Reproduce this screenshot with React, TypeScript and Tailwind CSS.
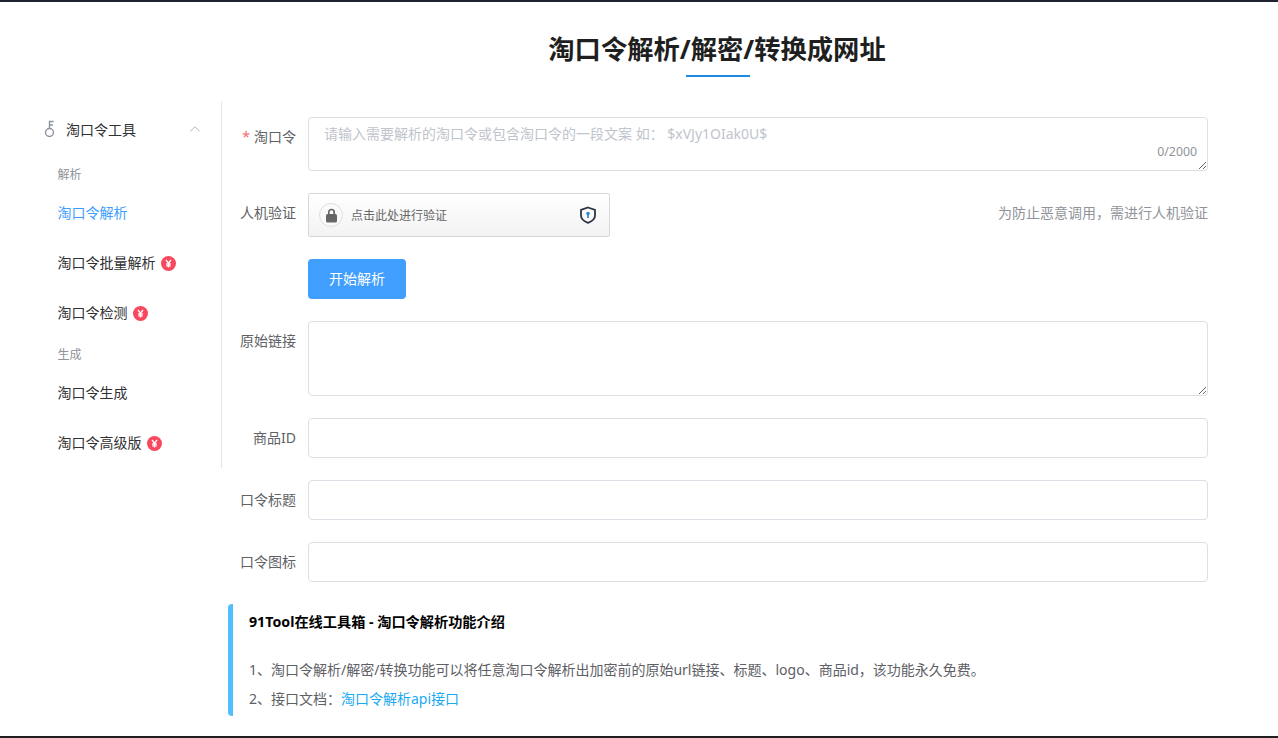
import { ChevronUp } from "lucide-react";

const cjk = "font-['Noto_Sans','Noto_Sans_CJK_SC',sans-serif]";

const KeyIcon = () => (
  <svg width="14" height="18" viewBox="0 0 14 18" fill="none" stroke="#8d939c" strokeWidth="1.4">
    <circle cx="6.5" cy="12.5" r="4" />
    <path d="M6.5 8.5V1.5H10.5M6.5 5H10" />
  </svg>
);

const Badge = () => (
  <span className="ml-[5px] mt-[2px] flex h-[15px] w-[15px] items-center justify-center rounded-full bg-[#f8485e]">
    <svg width="9" height="9" viewBox="0 0 9 9" fill="none" stroke="#fff" strokeWidth="1.3">
      <path d="M2 1L4.5 4.2L7 1M4.5 4.2V8.5M2.2 5H6.8M2.2 6.8H6.8" />
    </svg>
  </span>
);

const menu = [
  { type: "group", label: "解析" },
  { type: "item", label: "淘口令解析", active: true },
  { type: "item", label: "淘口令批量解析", paid: true },
  { type: "item", label: "淘口令检测", paid: true },
  { type: "group", label: "生成" },
  { type: "item", label: "淘口令生成" },
  { type: "item", label: "淘口令高级版", paid: true },
];

const Sidebar = () => (
  <aside className="h-[367px] w-[222px] shrink-0 border-r border-[#e6e6e6]">
    <div className="flex h-[56px] items-center pl-[43px] pr-[17px] text-[14px] text-[#303133]">
      <KeyIcon />
      <span className="ml-[9px] flex-1">淘口令工具</span>
      <ChevronUp size={18} strokeWidth={1.2} className="text-[#a3aebb]" />
    </div>
    <ul>
      {menu.map((m) =>
        m.type === "group" ? (
          <li key={m.label} className="flex h-[30px] items-center pl-[57.5px] pt-[5px] text-[12px] text-[#909399]">
            {m.label}
          </li>
        ) : (
          <li
            key={m.label}
            className={`flex h-[50px] items-center pl-[57.5px] text-[14px] ${m.active ? "text-[#409eff]" : "text-[#303133]"}`}
          >
            {m.label}
            {m.paid && <Badge />}
          </li>
        )
      )}
    </ul>
  </aside>
);

const Row = ({ label, required, children }: { label: string; required?: boolean; children: React.ReactNode }) => (
  <div className="mb-[22px] flex items-start">
    <label className="flex h-[38px] w-[74px] shrink-0 items-center justify-end text-[14px] text-[#606266]">
      {required && <span className="mr-[4px] text-[#f56c6c]">*</span>}
      {label}
    </label>
    <div className="ml-[12px] min-w-0 flex-1">{children}</div>
  </div>
);

const TextInput = () => (
  <input className="block h-[40px] w-full rounded-[4px] border border-[#dcdfe6] bg-white px-[15px] outline-none" />
);

export default function App() {
  return (
    <div className={`flex h-[738px] flex-col overflow-hidden bg-white ${cjk}`}>
      <div className="h-[2px] shrink-0 bg-[#1f2233]" />
      <div className="flex-1">
        <header className="ml-[222px] mr-[64px] flex h-[99px] flex-col items-center">
          <h1 className="-ml-[2px] mt-[26px] text-[26.3px] font-bold leading-[42px] text-[#1f1f1f]">淘口令解析/解密/转换成网址</h1>
          <div className="mt-[5px] h-[2px] w-[64px] bg-[#1e88e5]" />
        </header>
        <div className="flex">
          <Sidebar />
          <main className="min-w-0 flex-1 pr-[70px] pt-[16px]">
            <Row label="淘口令" required>
              <div className="relative h-[54px]">
                <textarea
                  className="block h-[54px] w-full resize-y rounded-[4px] border border-[#dcdfe6] bg-white px-[15px] py-[5px] text-[14px] leading-[21px] outline-none placeholder:text-[#c0c4cc]"
                  placeholder="请输入需要解析的淘口令或包含淘口令的一段文案 如： $xVJy1OIak0U$"
                />
                <span className="absolute bottom-[9px] right-[11px] text-[12.3px] leading-[20px] text-[#909399]">0/2000</span>
              </div>
            </Row>
            <Row label="人机验证">
              <div className="flex items-center justify-between">
                <div className="flex h-[44px] w-[302px] items-center rounded-[2px] border border-[#d8d8d8] bg-gradient-to-b from-white to-[#f3f3f3] pl-[10px] pr-[12px]">
                  <span className="flex h-[24px] w-[24px] items-center justify-center rounded-full border border-[#dedede] bg-[#fafafa]">
                    <svg width="13" height="15" viewBox="0 0 13 15" fill="#666">
                      <path d="M3 6.5V4.2a3.5 3.5 0 0 1 7 0v2.3H8.4V4.2a1.9 1.9 0 0 0-3.8 0v2.3z" />
                      <rect x="1" y="6" width="11" height="8.5" rx="1.6" />
                    </svg>
                  </span>
                  <span className="ml-[8px] mt-[1px] flex-1 text-[12px] text-[#666]">点击此处进行验证</span>
                  <svg width="18" height="18" viewBox="0 0 18 18" fill="none">
                    <path d="M9 1.5L16 4V9.5C16 13 12.5 15.5 9 16.8C5.5 15.5 2 13 2 9.5V4Z" stroke="#2c3444" strokeWidth="1.8" />
                    <circle cx="9" cy="7.5" r="1.8" fill="#2f8ccb" />
                    <rect x="8.1" y="8" width="1.8" height="4" fill="#2f8ccb" />
                  </svg>
                </div>
                <span className="-mt-[6px] text-[14px] text-[#909399]">为防止恶意调用，需进行人机验证</span>
              </div>
            </Row>
            <Row label="">
              <button className="h-[40px] w-[98px] rounded-[4px] bg-[#409eff] pb-[2px] text-[14px] text-white">开始解析</button>
            </Row>
            <Row label="原始链接">
              <textarea className="block h-[75px] w-full resize-y rounded-[4px] border border-[#dcdfe6] bg-white outline-none" />
            </Row>
            <Row label="商品ID">
              <TextInput />
            </Row>
            <Row label="口令标题">
              <TextInput />
            </Row>
            <Row label="口令图标">
              <TextInput />
            </Row>
            <section className="ml-[6px] h-[112px] rounded-[4px] border-l-[5px] border-[#50bfff] pl-[16px] pt-[7px]">
              <h2 className="text-[14.2px] font-bold leading-[22px] text-[#000]">91Tool在线工具箱 - 淘口令解析功能介绍</h2>
              <p className="mt-[22px] text-[14px] leading-[29px] text-[#5e6066]">
                1、淘口令解析/解密/转换功能可以将任意淘口令解析出加密前的原始url链接、标题、logo、商品id，该功能永久免费。
              </p>
              <p className="text-[14px] leading-[29px] text-[#5e6066]">
                2、接口文档：<span className="text-[#1aa9f2]">淘口令解析api接口</span>
              </p>
            </section>
          </main>
        </div>
      </div>
      <div className="h-[2px] shrink-0 bg-[#1f1f1f]" />
    </div>
  );
}
